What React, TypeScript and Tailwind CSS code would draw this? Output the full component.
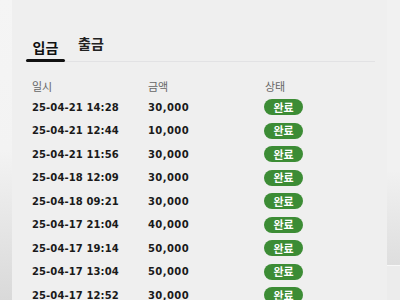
import React from "react";

const rows = [
  ["25-04-21 14:28", "30,000"],
  ["25-04-21 12:44", "10,000"],
  ["25-04-21 11:56", "30,000"],
  ["25-04-18 12:09", "30,000"],
  ["25-04-18 09:21", "30,000"],
  ["25-04-17 21:04", "40,000"],
  ["25-04-17 19:14", "50,000"],
  ["25-04-17 13:04", "50,000"],
  ["25-04-17 12:52", "30,000"],
];

export default function App() {
  const kr = { fontFamily: '"Noto Sans CJK KR", "Noto Sans", sans-serif' };
  const num = { fontFamily: '"DejaVu Sans", "Liberation Sans", sans-serif' };
  return (
    <div className="flex w-[400px] h-[300px] overflow-hidden bg-[#efefef]">
      <div className="w-[12px] h-full bg-gradient-to-b from-[#f5f5f5] via-[#f3f3f3] to-[#d9d9d9]" />
      <div className="flex-1 flex flex-col pl-[14px] pr-[12px] pt-[34px]">
        <div className="relative flex items-end h-[28px] border-b border-[#e2e2e4]" style={kr}>
          <div className="relative w-[39px] flex justify-center pb-[7px]">
            <span className="text-[14px] font-bold leading-none text-[#111]">입금</span>
            <div className="absolute left-0 right-0 bottom-[-1px] h-[3px] rounded-full bg-[#111]" />
          </div>
          <div className="ml-[13px] pb-[7px]">
            <span className="text-[14px] font-bold leading-none text-[#222]">출금</span>
          </div>
        </div>
        <div className="flex items-center h-[22px] mt-[16px] text-[11px] text-[#666]" style={kr}>
          <div className="w-[122px] pl-[6px]">일시</div>
          <div className="w-[117px]">금액</div>
          <div>상태</div>
        </div>
        <div className="flex flex-col mt-[1px]">
          {rows.map(([d, a], i) => (
            <div key={i} className="flex items-center h-[23.5px] text-[10px] font-semibold text-[#1a1a1a]">
              <div className="w-[122px] pl-[6px] tracking-[0.1px]" style={num}>{d}</div>
              <div className="w-[116px] tracking-[0.4px]" style={num}>{a}</div>
              <div
                className="w-[39px] h-[16px] rounded-full bg-[#3c8c35] text-white text-[11px] font-bold flex items-center justify-center leading-none"
                style={kr}
              >
                완료
              </div>
            </div>
          ))}
        </div>
      </div>
      <div className="w-[13px] h-full flex flex-col">
        <div className="h-[170px] bg-[#f1f1f1]" />
        <div className="h-[95px] bg-gradient-to-b from-[#f1f1f1] to-[#dedede]" />
        <div className="h-[35px] bg-[#ececec] border-t border-[#f8f8f8]" />
      </div>
    </div>
  );
}
